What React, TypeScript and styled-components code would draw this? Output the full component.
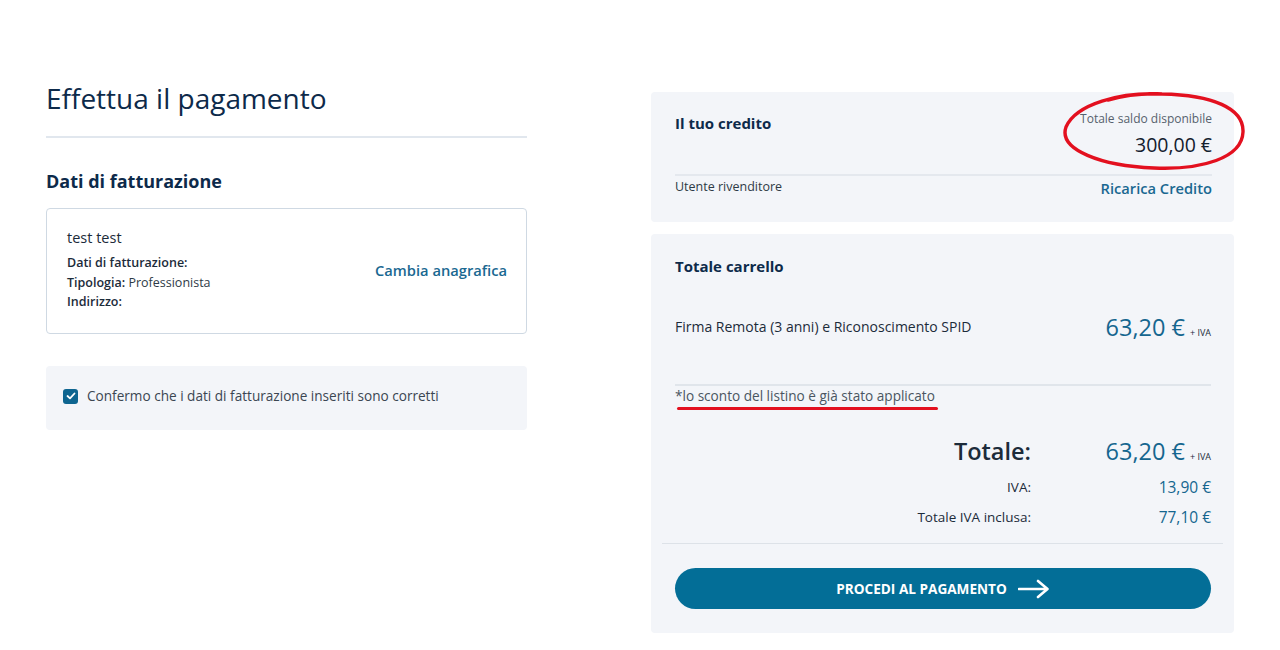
import styled, { createGlobalStyle } from "styled-components";

const GlobalStyle = createGlobalStyle`
    * {
        box-sizing: border-box;
    }

    body {
        margin: 0;
        background: #ffffff;
        font-family: "Open Sans", "Liberation Sans", sans-serif;
        color: #1c2b3a;
    }
`;

const ArrowIcon = () => (
    <svg width="32" height="20" viewBox="0 0 32 20" fill="none">
        <path
            d="M1 10H29M20 2L29.5 10L20 18"
            stroke="#ffffff"
            strokeWidth="2.6"
            strokeLinecap="round"
            strokeLinejoin="round"
        />
    </svg>
);

const CheckIcon = () => (
    <svg width="10" height="8" viewBox="0 0 10 8" fill="none">
        <path d="M1.5 4L4 6.3L8.5 1.5" stroke="#ffffff" strokeWidth="1.8" strokeLinecap="round" strokeLinejoin="round" />
    </svg>
);

const Ellipse = () => (
    <svg width="184" height="80" viewBox="0 0 184 80" fill="none">
        <path
            d="M100 2C58 0 14 12 4 35C-4 58 40 74 92 76C140 78 180 66 181 40C182 16 150 3 100 2C80 1 60 4 46 8"
            stroke="#e3101f"
            strokeWidth="3.4"
            strokeLinecap="round"
        />
    </svg>
);

export default function App() {
    return (
        <>
            <GlobalStyle />
            <Page>
                <LeftColumn>
                    <PageTitle>Effettua il pagamento</PageTitle>
                    <Divider />
                    <SectionTitle>Dati di fatturazione</SectionTitle>
                    <BillingCard>
                        <BillingInfo>
                            <BillingName>test test</BillingName>
                            <BillingLine>
                                <b>Dati di fatturazione:</b>
                            </BillingLine>
                            <BillingLine>
                                <b>Tipologia:</b> Professionista
                            </BillingLine>
                            <BillingLine>
                                <b>Indirizzo:</b>
                            </BillingLine>
                        </BillingInfo>
                        <LinkText>Cambia anagrafica</LinkText>
                    </BillingCard>
                    <ConfirmBox>
                        <CheckBox>
                            <CheckIcon />
                        </CheckBox>
                        <ConfirmText>Confermo che i dati di fatturazione inseriti sono corretti</ConfirmText>
                    </ConfirmBox>
                </LeftColumn>

                <RightColumn>
                    <CreditPanel>
                        <CreditHeader>
                            <PanelTitle>Il tuo credito</PanelTitle>
                            <Balance>
                                <BalanceLabel>Totale saldo disponibile</BalanceLabel>
                                <BalanceValue>300,00 €</BalanceValue>
                            </Balance>
                        </CreditHeader>
                        <CreditFooter>
                            <SmallText>Utente rivenditore</SmallText>
                            <LinkText>Ricarica Credito</LinkText>
                        </CreditFooter>
                        <Annotation>
                            <Ellipse />
                        </Annotation>
                    </CreditPanel>

                    <CartPanel>
                        <PanelTitle>Totale carrello</PanelTitle>
                        <ItemRow>
                            <ItemName>Firma Remota (3 anni) e Riconoscimento SPID</ItemName>
                            <Price>
                                <PriceValue>63,20 €</PriceValue>
                                <PriceSuffix>+ IVA</PriceSuffix>
                            </Price>
                        </ItemRow>
                        <DiscountNote>*lo sconto del listino è già stato applicato</DiscountNote>
                        <Totals>
                            <TotalLabel $big>Totale:</TotalLabel>
                            <Price>
                                <PriceValue>63,20 €</PriceValue>
                                <PriceSuffix>+ IVA</PriceSuffix>
                            </Price>
                            <TotalLabel>IVA:</TotalLabel>
                            <TotalValue>13,90 €</TotalValue>
                            <TotalLabel>Totale IVA inclusa:</TotalLabel>
                            <TotalValue>77,10 €</TotalValue>
                        </Totals>
                        <WideDivider />
                        <PayButton>
                            PROCEDI AL PAGAMENTO
                            <ArrowIcon />
                        </PayButton>
                    </CartPanel>
                </RightColumn>
            </Page>
        </>
    );
}

const Page = styled.div`
    width: 1188px;
    margin: 0 auto;
    padding-top: 78px;
    display: grid;
    grid-template-columns: 481px 583px;
    column-gap: 124px;
    align-items: start;
`;

const LeftColumn = styled.div`
    display: flex;
    flex-direction: column;
`;

const PageTitle = styled.h1`
    margin: 0;
    font-size: 28px;
    line-height: 40px;
    font-weight: 400;
    color: #0d2a4a;
`;

const Divider = styled.div`
    margin-top: 18px;
    border-top: 2px solid #e1e7ee;
`;

const SectionTitle = styled.h2`
    margin: 31px 0 15px;
    font-size: 18px;
    line-height: 24px;
    font-weight: 700;
    color: #0d2a4a;
`;

const BillingCard = styled.div`
    display: flex;
    align-items: center;
    justify-content: space-between;
    padding: 19px 19px 21px 20px;
    border: 1px solid #cfd9e3;
    border-radius: 4px;
`;

const BillingInfo = styled.div`
    display: flex;
    flex-direction: column;
`;

const BillingName = styled.div`
    font-size: 14.5px;
    line-height: 20px;
    color: #1c2b3a;
    margin-bottom: 5px;
`;

const BillingLine = styled.div`
    font-size: 12.5px;
    line-height: 19.5px;
    color: #2e3a46;

    b {
        font-weight: 600;
        color: #1c2b3a;
    }
`;

const LinkText = styled.span`
    font-size: 14.7px;
    line-height: 22px;
    font-weight: 600;
    color: #1a6891;
`;

const ConfirmBox = styled.div`
    margin-top: 32px;
    display: flex;
    align-items: flex-start;
    gap: 9px;
    padding: 21px 17px 25px;
    background: #f3f5f9;
    border-radius: 4px;
`;

const CheckBox = styled.span`
    width: 15px;
    height: 15px;
    margin-top: 2px;
    flex-shrink: 0;
    display: flex;
    align-items: center;
    justify-content: center;
    background: #0e6590;
    border-radius: 3px;
`;

const ConfirmText = styled.span`
    font-size: 13.6px;
    line-height: 18px;
    color: #3b4652;
`;

const RightColumn = styled.div`
    display: flex;
    flex-direction: column;
    gap: 12px;
    margin-top: 14px;
`;

const Panel = styled.div`
    position: relative;
    background: #f3f5f9;
    border-radius: 4px;
`;

const CreditPanel = styled(Panel)`
    padding: 18px 22px 23px 24px;
`;

const CreditHeader = styled.div`
    display: flex;
    justify-content: space-between;
    align-items: flex-start;
    padding-bottom: 16px;
    border-bottom: 2px solid #e4e8ee;
`;

const PanelTitle = styled.div`
    font-size: 15px;
    line-height: 20px;
    font-weight: 700;
    color: #0d2a4a;
    margin-top: 3px;
`;

const Balance = styled.div`
    display: flex;
    flex-direction: column;
    align-items: flex-end;
    gap: 4px;
`;

const BalanceLabel = styled.span`
    font-size: 12px;
    line-height: 18px;
    color: #56616d;
`;

const BalanceValue = styled.span`
    font-size: 19.5px;
    line-height: 26px;
    color: #13202e;
`;

const CreditFooter = styled.div`
    display: flex;
    justify-content: space-between;
    align-items: flex-start;
    padding-top: 1px;
`;

const SmallText = styled.span`
    font-size: 12.5px;
    line-height: 20px;
    color: #2e3a46;
`;

const Annotation = styled.div`
    position: absolute;
    left: 411px;
    top: 0;
    pointer-events: none;
`;

const CartPanel = styled(Panel)`
    display: flex;
    flex-direction: column;
    padding: 19px 23px 24px 24px;
`;

const ItemRow = styled.div`
    display: flex;
    justify-content: space-between;
    align-items: center;
    margin-top: 36px;
    padding-bottom: 42px;
    border-bottom: 2px solid #e0e5eb;
`;

const ItemName = styled.span`
    font-size: 14px;
    line-height: 20px;
    color: #1c2b3a;
`;

const Price = styled.span`
    display: flex;
    align-items: baseline;
    justify-content: flex-end;
    gap: 5px;
`;

const PriceValue = styled.span`
    font-size: 23.5px;
    line-height: 30px;
    color: #15668f;
`;

const PriceSuffix = styled.span`
    font-size: 9px;
    color: #1c2b3a;
`;

const DiscountNote = styled.div`
    position: relative;
    align-self: flex-start;
    font-size: 13.6px;
    line-height: 20px;
    color: #4a5561;

    &::after {
        content: "";
        position: absolute;
        left: 2px;
        right: -3px;
        top: 21px;
        height: 3px;
        border-radius: 2px;
        background: #e3101f;
    }
`;

const Totals = styled.div`
    display: grid;
    grid-template-columns: 1fr 180px;
    row-gap: 10px;
    margin-top: 29px;
    text-align: right;
    align-items: center;
`;

const TotalLabel = styled.span<{ $big?: boolean }>`
    font-size: ${(p) => (p.$big ? "23.5px" : "13.5px")};
    line-height: ${(p) => (p.$big ? "32px" : "20px")};
    font-weight: ${(p) => (p.$big ? 600 : 400)};
    color: #1c2b3a;
`;

const TotalValue = styled.span`
    font-size: 15.5px;
    line-height: 20px;
    color: #15668f;
`;

const WideDivider = styled.div`
    margin: 16px -12px 24px -13px;
    border-top: 1px solid #dde2e8;
`;

const PayButton = styled.button`
    height: 41px;
    border: none;
    border-radius: 21px;
    background: #036e97;
    color: #ffffff;
    font-family: "Open Sans", "Liberation Sans", sans-serif;
    font-size: 13.6px;
    font-weight: 700;
    display: flex;
    align-items: center;
    justify-content: center;
    gap: 11px;
    cursor: pointer;
`;
